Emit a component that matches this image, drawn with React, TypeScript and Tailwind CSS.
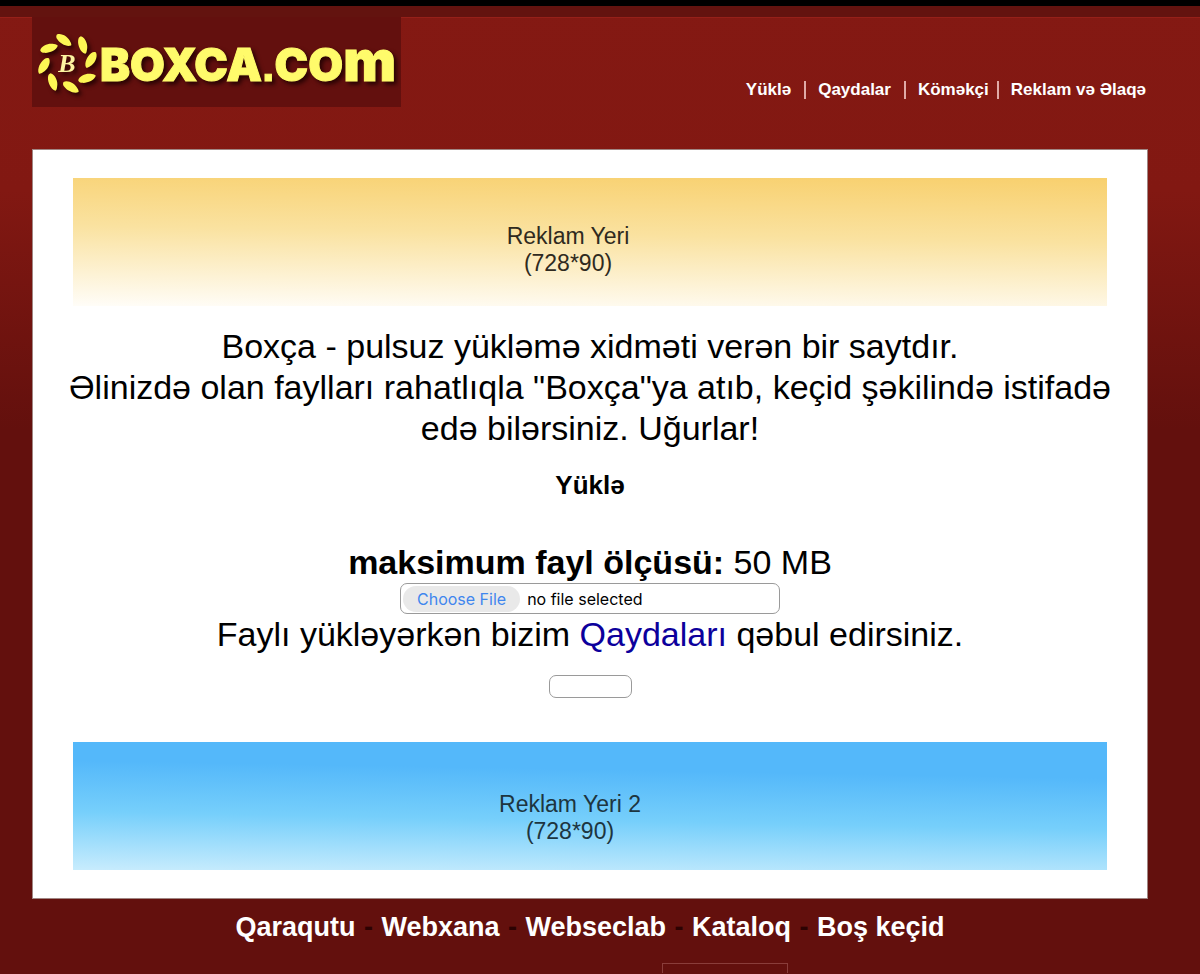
import { useState } from "react";

type NavItem = {
  label: string;
  href: string;
};

const navItems: NavItem[] = [
  { label: "Yüklə", href: "#yukle" },
  { label: "Qaydalar", href: "#qaydalar" },
  { label: "Köməkçi", href: "#komekci" },
  { label: "Reklam və Əlaqə", href: "#elaqe" },
];

const partners: NavItem[] = [
  { label: "Qaraqutu", href: "#qaraqutu" },
  { label: "Webxana", href: "#webxana" },
  { label: "Webseclab", href: "#webseclab" },
  { label: "Kataloq", href: "#kataloq" },
  { label: "Boş keçid", href: "#bos" },
];

// cx, cy, rotation of each petal around the B
const petals = [
  [32, 23, 32],
  [51, 28, 70],
  [59, 43, 117],
  [55, 61, -20],
  [39, 70, 28],
  [21, 65, 68],
  [12, 49, 118],
  [17, 31, -20],
];

function Logo() {
  return (
    <svg viewBox="0 0 369 90" className="block h-[90px] w-[369px]" role="img" aria-label="BOXCA.COM">
      <rect width="369" height="90" fill="#63100e" />
      <g className="drop-shadow-[3px_3px_2px_#2a0303]">
        {petals.map(([x, y, r]) => (
          <path
            key={`${x}-${y}`}
            d="M-9-1C-6-5 2-5 6-2C8-1 9 0 9 1C6 5-2 5-6 3C-8 2-9 1-9-1Z"
            fill="#fdf654"
            transform={`translate(${x} ${y}) rotate(${r})`}
          />
        ))}
        <text
          x="35"
          y="55"
          textAnchor="middle"
          fontSize="26"
          className="fill-[#fdf3a0] font-['Liberation_Serif',serif] font-bold italic"
        >
          B
        </text>
        <text
          x="68"
          y="64"
          fontSize="45"
          strokeWidth="1"
          className="fill-[#fffb6b] stroke-[#fffb6b] font-['Inter',sans-serif] font-black"
        >
          BOXCA
          <tspan className="font-['Liberation_Sans',sans-serif]">.</tspan>
          CO
          <tspan fontSize="56">m</tspan>
        </text>
      </g>
    </svg>
  );
}

export default function App() {
  const [fileName, setFileName] = useState("");

  return (
    <div className="flex min-h-screen flex-col bg-[#63100d] bg-[linear-gradient(#841913_0px,#821812_190px,#63100d_430px)] font-['Liberation_Sans',Arial,sans-serif] text-black">
      <div className="h-[17px] border-t-[6px] border-black bg-[#63130f]" />

      <header className="flex h-[132px] items-start justify-between border-t border-[#962019] pr-[54px] pl-8">
        <a href="#home" className="-mt-px">
          <Logo />
        </a>
        <nav className="mt-[60px] flex items-center text-[17px] leading-6 font-bold text-white">
          {navItems.map((item, i) => (
            <span key={item.label} className="flex items-center">
              {i > 0 && (
                <span
                  className={`mr-3 h-[18px] w-[2px] bg-[#e0aaa6] ${i === navItems.length - 1 ? "ml-2" : "ml-[13px]"}`}
                />
              )}
              <a href={item.href}>{item.label}</a>
            </span>
          ))}
        </nav>
      </header>

      <main className="mr-[52px] ml-8 border border-[#a08683] bg-white px-10 pt-7 pb-7 text-center">
        <div className="flex h-32 flex-col justify-center bg-[linear-gradient(181deg,#f8d06e,#fae2a0_45%,#fffdf8)] pt-4 pr-11 text-[23px] leading-[27px] text-[#2f2a20]">
          <p>Reklam Yeri</p>
          <p>(728*90)</p>
        </div>

        <div className="-mx-2 mt-5 text-[34px] leading-[41px]">
          <p>Boxça - pulsuz yükləmə xidməti verən bir saytdır.</p>
          <p>Əlinizdə olan faylları rahatlıqla "Boxça"ya atıb, keçid şəkilində istifadə edə bilərsiniz. Uğurlar!</p>
        </div>

        <h1 className="mt-5 text-[26px] leading-8 font-bold">Yüklə</h1>

        <form onSubmit={(e) => e.preventDefault()} className="mt-[41px] text-[34px] leading-[41px]">
          <p>
            <b>maksimum fayl ölçüsü:</b> 50 MB
          </p>
          <label className="relative mx-auto flex h-[31px] w-[380px] cursor-pointer items-center rounded-[7px] border border-[#9a9a9a] px-[2px] text-[16px] leading-5">
            <input
              type="file"
              className="sr-only"
              onChange={(e) => setFileName(e.target.files?.[0]?.name ?? "")}
            />
            <span className="rounded-full bg-[#e9e9e9] px-[14px] py-[3px] font-['Inter',sans-serif] text-[#3f86ee]">
              Choose File
            </span>
            <span className="ml-[7px] font-['Inter',sans-serif]">{fileName || "no file selected"}</span>
          </label>
          <p>
            Faylı yükləyərkən bizim{" "}
            <a href="#qaydalar" className="text-[#0c009c]">
              Qaydaları
            </a>{" "}
            qəbul edirsiniz.
          </p>
          <button
            type="submit"
            aria-label="Yüklə"
            className="mx-auto mt-5 block h-[23px] w-[83px] rounded-[7px] border border-[#9a9a9a] bg-white"
          />
        </form>

        <div className="mt-11 flex h-32 flex-col justify-center bg-[linear-gradient(181deg,#54b8fa,#54b8fa_25%,#76cffb_60%,#c8ecfd)] pt-6 pr-10 text-[23px] leading-[27px] text-[#1d3540]">
          <p>Reklam Yeri 2</p>
          <p>(728*90)</p>
        </div>
      </main>

      <footer className="mr-[52px] ml-8 flex flex-col items-center pt-3 text-[27px] leading-8 font-bold">
        <p>
          {partners.map((item, i) => (
            <span key={item.label}>
              {i > 0 && <span className="px-px text-[#2c0202]"> - </span>}
              <a href={item.href} className="text-white">
                {item.label}
              </a>
            </span>
          ))}
        </p>
        <div className="mt-5 ml-[269px] h-[10px] w-[126px] border border-b-0 border-[#8a3d3a]" />
      </footer>
    </div>
  );
}
